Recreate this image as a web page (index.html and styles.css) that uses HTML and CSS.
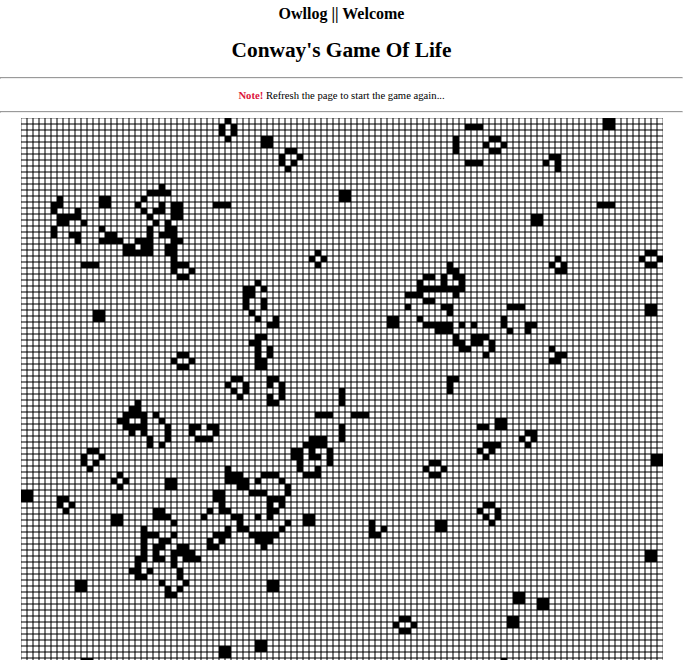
FILE: index.html
```html
<!DOCTYPE html>
<html lang="en">

<head>
    <meta charset="UTF-8">
    <meta name="viewport" content="width=device-width, initial-scale=1.0">
    <title>Owllog || Conway's Game Of Life</title>
    <link rel="stylesheet" href="styles.css">
</head>

<body>
    <h3 class="site-title">Owllog || Welcome</h3>
    <h2 class="page-title">Conway's Game Of Life</h2>
    <hr>
    <p class="note"><span class="note-label">Note!</span> Refresh the page to start the game again...</p>
    <hr>
    <canvas id="board" class="board" width="642" height="542"></canvas>
    <script src="game.js"></script>
</body>

</html>
```

FILE: styles.css
```css
body {
    margin: 0;
    font-family: "Liberation Serif", serif;
    color: #000;
    background: #fff;
    text-align: center;
}

.site-title {
    margin: 5px 0 0;
    font-size: 16px;
    line-height: 18px;
}

.page-title {
    margin: 15px 0 0;
    font-size: 21.33px;
    line-height: 25px;
}

hr {
    margin: 14px 0 0;
}

.note {
    margin: 0;
    padding: 10px 0;
    font-size: 10.67px;
    line-height: 12px;
}

.note + hr {
    margin-top: 0;
}

.note-label {
    color: crimson;
    font-weight: bold;
}

.board {
    display: block;
    margin: 5px auto 0;
}
```

FILE: game.js
```js
const SIZE = 6;
const COLS = 107;
const ROWS = 91;

// live cells of the generation on screen, row -> columns
const live = {
    0: [34, 97, 98],
    1: [33, 35, 74, 75, 76, 97, 98],
    2: [33, 35],
    3: [34, 40, 41, 72, 78, 79],
    4: [40, 41, 72, 77, 80],
    5: [44, 45, 72, 78, 79],
    6: [43, 46, 88, 89],
    7: [43, 45, 74, 75, 76, 87, 89],
    8: [44, 89],
    11: [23],
    12: [21, 22, 23, 24, 53, 54],
    13: [6, 13, 14, 20, 53, 54],
    14: [5, 6, 13, 14, 19, 23, 25, 26, 32, 33, 34, 96, 97, 98],
    15: [5, 9, 20, 22, 23, 25, 26],
    16: [6, 7, 8, 9, 21, 25, 26, 85, 86],
    17: [6, 7, 10, 22, 24, 85, 86],
    18: [5, 13, 21, 24, 25],
    19: [5, 8, 9, 14, 15, 21, 23, 24, 25],
    20: [9, 13, 14, 15, 16, 19, 20, 21, 25, 26],
    21: [17, 18, 20, 21, 24, 25],
    22: [17, 18, 19, 20, 21, 24, 25, 49, 104, 105],
    23: [25, 48, 50, 89, 103, 106],
    24: [10, 11, 12, 25, 26, 27, 49, 71, 88, 90, 104, 105],
    25: [25, 28, 71, 72, 89, 90],
    26: [26, 27, 67, 68, 70, 72, 73],
    27: [39, 66, 70, 73],
    28: [37, 38, 40, 66, 67, 68, 69, 70, 71, 72, 73],
    29: [37, 38, 64, 65, 66, 72],
    30: [37, 40, 67, 68],
    31: [37, 40, 64, 70, 71, 81, 82, 83, 104, 105],
    32: [12, 13, 38, 71, 104, 105],
    33: [12, 13, 39, 42, 61, 62, 66, 80],
    34: [41, 42, 61, 62, 67, 68, 69, 70, 71, 73, 75, 80, 84, 85],
    35: [69, 70, 71, 81, 84],
    36: [39, 40, 72, 75, 76, 77],
    37: [38, 39, 72, 73, 75, 76, 78],
    38: [39, 41, 73, 74, 78, 88],
    39: [26, 27, 39, 41, 77, 89, 90],
    40: [25, 28, 39, 40, 88, 89],
    41: [26, 27, 39, 40],
    43: [35, 36, 41, 42, 71, 72],
    44: [34, 37, 41, 43, 71],
    45: [35, 37, 43, 53, 71],
    46: [36, 41, 43, 53],
    47: [19, 41, 42, 53],
    48: [18, 19],
    49: [17, 18, 19, 20, 22, 49, 50, 51, 55, 56, 57],
    50: [16, 17, 20, 23, 79, 80],
    51: [17, 18, 19, 20, 24, 28, 29, 31, 32, 53, 76, 77, 79, 80],
    52: [18, 20, 24, 28, 32, 53, 84, 85],
    53: [21, 24, 29, 30, 31, 48, 49, 50, 53, 83, 85],
    54: [21, 23, 47, 48, 49, 50, 77, 78, 79, 84],
    55: [11, 12, 45, 46, 48, 51, 76, 78],
    56: [10, 13, 45, 46, 48, 49, 51, 77, 105, 106],
    57: [10, 12, 46, 51, 68, 69, 105, 106],
    58: [11, 34, 46, 49, 67, 70],
    59: [16, 34, 35, 36, 40, 41, 42, 47, 48, 49, 68, 69],
    60: [15, 17, 24, 25, 34, 35, 36, 37, 39, 43],
    61: [16, 24, 25, 36, 37, 44],
    62: [0, 1, 32, 33, 38, 39, 40, 44],
    63: [0, 1, 6, 7, 32, 33, 41, 42, 43],
    64: [6, 8, 33, 41, 43, 77, 78],
    65: [7, 22, 23, 31, 33, 34, 41, 42, 76, 79],
    66: [15, 16, 22, 23, 24, 30, 35, 36, 39, 41, 47, 48, 77, 79],
    67: [15, 16, 25, 36, 44, 47, 48, 58, 69, 70, 78],
    68: [20, 34, 36, 37, 43, 58, 60, 69, 70],
    69: [20, 21, 22, 25, 32, 33, 34, 38, 39, 40, 41, 42, 58, 59],
    70: [20, 23, 24, 31, 33, 39, 40, 41],
    71: [20, 22, 23, 26, 27, 31, 32, 40],
    72: [20, 22, 25, 26, 27, 28, 104, 105],
    73: [19, 20, 22, 23, 25, 27, 28, 29, 104, 105],
    74: [19, 25],
    75: [18, 19, 21, 26],
    76: [19, 20, 26],
    77: [9, 10, 23, 27, 41, 42],
    78: [9, 10, 24, 26, 41, 42],
    79: [24, 25, 82, 83],
    80: [82, 83, 86, 87],
    81: [86, 87],
    83: [63, 64, 81, 82],
    84: [62, 65, 81, 82],
    85: [63, 64],
    87: [39, 40],
    88: [33, 34, 39, 40],
    89: [33, 34],
    90: [10, 11, 80]
};

const canvas = document.getElementById("board");
const ctx = canvas.getContext("2d");

function draw() {
    ctx.lineWidth = 0.6;
    ctx.strokeStyle = "#000000";
    for (let x = 0; x < COLS; x++) {
        for (let y = 0; y < ROWS; y++) {
            ctx.strokeRect(x * SIZE, y * SIZE, SIZE, SIZE);
        }
    }
    // live cells go on top so blocks stay solid
    ctx.fillStyle = "#000000";
    for (const y in live) {
        for (const x of live[y]) {
            ctx.fillRect(x * SIZE, y * SIZE, SIZE, SIZE);
        }
    }
}

draw();
```
